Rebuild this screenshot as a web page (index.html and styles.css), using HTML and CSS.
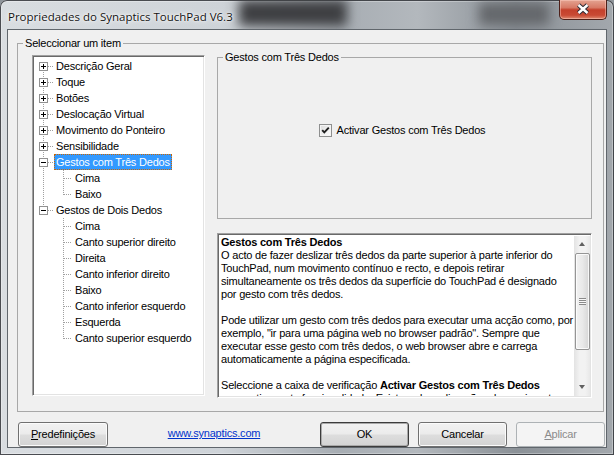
FILE: index.html
```html
<!DOCTYPE html>
<html lang="pt">
<head>
<meta charset="utf-8">
<title>Propriedades do Synaptics TouchPad V6.3</title>
<link rel="stylesheet" href="styles.css">
</head>
<body>
<div class="window">
  <div class="titlebar">
    <span class="title">Propriedades do Synaptics TouchPad V6.3</span>
    <span class="glass glass-a" aria-hidden="true"></span>
    <span class="glass glass-b" aria-hidden="true"></span>
    <button class="close" aria-label="Fechar">
      <svg width="14" height="12" viewBox="0 0 14 12">
        <path d="M2.5 2 L11.5 10 M11.5 2 L2.5 10" stroke="#2b2b35" stroke-width="4.4" fill="none"/>
        <path d="M2.5 2 L11.5 10 M11.5 2 L2.5 10" stroke="#ffffff" stroke-width="2.4" fill="none"/>
      </svg>
    </button>
  </div>
  <div class="client">
    <fieldset class="group outer">
      <legend>Seleccionar um item</legend>
      <div class="outer-body">
        <div class="tree sunken">
          <div class="node"><span class="c0 first"><span class="exp plus"></span></span><span class="lbl">Descrição Geral</span></div>
          <div class="node"><span class="c0 mid"><span class="exp plus"></span></span><span class="lbl">Toque</span></div>
          <div class="node"><span class="c0 mid"><span class="exp plus"></span></span><span class="lbl">Botões</span></div>
          <div class="node"><span class="c0 mid"><span class="exp plus"></span></span><span class="lbl">Deslocação Virtual</span></div>
          <div class="node"><span class="c0 mid"><span class="exp plus"></span></span><span class="lbl">Movimento do Ponteiro</span></div>
          <div class="node"><span class="c0 mid"><span class="exp plus"></span></span><span class="lbl">Sensibilidade</span></div>
          <div class="node"><span class="c0 mid"><span class="exp"></span></span><span class="lbl sel">Gestos com Três Dedos</span></div>
          <div class="node"><span class="c1 cont mid"></span><span class="lbl">Cima</span></div>
          <div class="node"><span class="c1 cont last"></span><span class="lbl">Baixo</span></div>
          <div class="node"><span class="c0 last"><span class="exp"></span></span><span class="lbl">Gestos de Dois Dedos</span></div>
          <div class="node"><span class="c1 mid"></span><span class="lbl">Cima</span></div>
          <div class="node"><span class="c1 mid"></span><span class="lbl">Canto superior direito</span></div>
          <div class="node"><span class="c1 mid"></span><span class="lbl">Direita</span></div>
          <div class="node"><span class="c1 mid"></span><span class="lbl">Canto inferior direito</span></div>
          <div class="node"><span class="c1 mid"></span><span class="lbl">Baixo</span></div>
          <div class="node"><span class="c1 mid"></span><span class="lbl">Canto inferior esquerdo</span></div>
          <div class="node"><span class="c1 mid"></span><span class="lbl">Esquerda</span></div>
          <div class="node"><span class="c1 last"></span><span class="lbl">Canto superior esquerdo</span></div>
        </div>
        <div class="right-col">
          <fieldset class="group inner">
            <legend>Gestos com Três Dedos</legend>
            <div class="inner-body">
              <label class="check">
                <span class="cb">
                  <svg width="11" height="11" viewBox="0 0 11 11"><path d="M2.2 5.2 L4.3 7.4 L8.8 2.6" stroke="#1e1e1e" stroke-width="1.9" fill="none"/></svg>
                </span>
                <span>Activar Gestos com Três Dedos</span>
              </label>
            </div>
          </fieldset>
          <div class="desc sunken">
            <div class="desc-text">
              <p><b>Gestos com Três Dedos</b><br>O acto de fazer deslizar três dedos da parte superior à parte inferior do<br>TouchPad, num movimento contínuo e recto, e depois retirar<br>simultaneamente os três dedos da superfície do TouchPad é designado<br>por gesto com três dedos.</p>
              <p>Pode utilizar um gesto com três dedos para executar uma acção como, por<br>exemplo, "ir para uma página web no browser padrão". Sempre que<br>executar esse gesto com três dedos, o web browser abre e carrega<br>automaticamente a página especificada.</p>
              <p>Seleccione a caixa de verificação <b>Activar Gestos com Três Dedos</b><br>para activar esta funcionalidade. Existem duas direcções de movimento</p>
            </div>
            <div class="scrollbar">
              <div class="sb-btn"><span class="arrow up"></span></div>
              <div class="sb-thumb"><span class="grip"></span></div>
              <div class="sb-track"></div>
              <div class="sb-btn"><span class="arrow down"></span></div>
            </div>
          </div>
        </div>
      </div>
    </fieldset>
    <div class="buttons">
      <button class="btn"><u>P</u>redefinições</button>
      <div class="link-area"><a class="link" href="#">www.synaptics.com</a></div>
      <button class="btn default">OK</button>
      <button class="btn">Cancelar</button>
      <button class="btn disabled"><u>A</u>plicar</button>
    </div>
  </div>
</div>
</body>
</html>
```
FILE: styles.css
```css
html, body {
  margin: 0;
  padding: 0;
  background: #8f959b;
}
body {
  width: 614px;
  height: 455px;
  overflow: hidden;
  font-family: "Liberation Sans", Arial, sans-serif;
  font-size: 11px;
  letter-spacing: -0.2px;
  color: #000;
}
.window {
  width: 614px;
  height: 455px;
  box-sizing: border-box;
  padding: 0 8px 8px;
  display: flex;
  flex-direction: column;
  border-radius: 7px 7px 0 0;
  overflow: hidden;
  background: linear-gradient(90deg, #d9dde1 0%, #ced3d8 36%, #a7adb3 55%, #b3b8bd 68%, #8b9197 84%, #a3a8ad 100%);
  box-shadow: inset 0 0 0 1px rgba(35,38,42,.8), inset 0 0 0 2px rgba(255,255,255,.3);
}
.titlebar {
  height: 30px;
  display: flex;
  align-items: flex-start;
  flex: none;
}
.title {
  position: relative;
  z-index: 1;
  font-family: "Open Sans", "Noto Sans", sans-serif;
  font-size: 11.5px;
  letter-spacing: 0;
  line-height: 15px;
  margin-top: 9px;
  color: #111;
  white-space: nowrap;
  text-shadow: 0 0 6px rgba(255,255,255,.95), 0 0 3px rgba(255,255,255,.9), 0 0 1px rgba(255,255,255,.9);
}
.glass {
  flex: none;
  display: block;
  filter: blur(6px);
}
.glass-a {
  width: 108px;
  height: 26px;
  margin: 0 0 0 6px;
  background: #3e3f42;
}
.glass-b {
  width: 70px;
  height: 22px;
  margin: 3px 10px 0 auto;
  background: #64676b;
}
.close {
  position: relative;
  z-index: 1;
  margin: 0 -1px 0 0;
  width: 48px;
  height: 20px;
  padding: 0;
  border: 1px solid #4e2019;
  border-top: 0;
  border-radius: 0 0 5px 5px;
  background: linear-gradient(to bottom, #e4a391 0%, #d77a66 40%, #c4402b 52%, #c94a34 80%, #de8a70 100%);
  box-shadow: inset 0 0 0 1px rgba(255,210,200,.45);
  display: flex;
  align-items: center;
  justify-content: center;
}
.close svg { display: block; margin-top: -1px; }
.client {
  position: relative;
  z-index: 2;
  width: 598px;
  height: 417px;
  flex: none;
  background: #f0f0f0;
  box-shadow: 0 0 0 1px #60666c;
  display: flex;
  flex-direction: column;
}
.group {
  border: 1px solid #a8a8a8;
  padding: 0;
  min-width: 0;
}
.group legend {
  padding: 0 2px;
  margin-left: 5px;
}
.outer {
  margin: 6px 0 0 9px;
  width: 587px;
  box-sizing: border-box;
}
.outer legend { line-height: 15px; }
.outer-body {
  display: flex;
  gap: 12px;
  padding: 0 11px 13px 14px;
}
.sunken {
  box-sizing: border-box;
  border: 1px solid;
  border-color: #a0a0a0 #ffffff #ffffff #a0a0a0;
  box-shadow: inset 1px 1px 0 #696969, inset -1px -1px 0 #e3e3e3;
  background: #fff;
}
.tree {
  width: 173px;
  height: 341px;
  margin-top: 4px;
  padding: 2px 0 0 2px;
  flex: none;
}
.node {
  display: flex;
  height: 16px;
  white-space: nowrap;
}
.c0, .c1 {
  flex: none;
  height: 16px;
  display: flex;
  align-items: flex-start;
  background-repeat: no-repeat;
}
.c0 { width: 19px; }
.c1 { width: 38px; }
.c0.first {
  background-image: repeating-linear-gradient(to right, #a0a0a0 0 1px, transparent 1px 2px), repeating-linear-gradient(to bottom, #a0a0a0 0 1px, transparent 1px 2px);
  background-position: 13px 8px, 8px 8px;
  background-size: 6px 1px, 1px 8px;
}
.c0.mid {
  background-image: repeating-linear-gradient(to right, #a0a0a0 0 1px, transparent 1px 2px), repeating-linear-gradient(to bottom, #a0a0a0 0 1px, transparent 1px 2px);
  background-position: 13px 8px, 8px 0;
  background-size: 6px 1px, 1px 16px;
}
.c0.last {
  background-image: repeating-linear-gradient(to right, #a0a0a0 0 1px, transparent 1px 2px), repeating-linear-gradient(to bottom, #a0a0a0 0 1px, transparent 1px 2px);
  background-position: 13px 8px, 8px 0;
  background-size: 6px 1px, 1px 9px;
}
.c1.mid {
  background-image: repeating-linear-gradient(to right, #a0a0a0 0 1px, transparent 1px 2px), repeating-linear-gradient(to bottom, #a0a0a0 0 1px, transparent 1px 2px);
  background-position: 29px 8px, 28px 0;
  background-size: 8px 1px, 1px 16px;
}
.c1.last {
  background-image: repeating-linear-gradient(to right, #a0a0a0 0 1px, transparent 1px 2px), repeating-linear-gradient(to bottom, #a0a0a0 0 1px, transparent 1px 2px);
  background-position: 29px 8px, 28px 0;
  background-size: 8px 1px, 1px 9px;
}
.c1.cont.mid {
  background-image: repeating-linear-gradient(to right, #a0a0a0 0 1px, transparent 1px 2px), repeating-linear-gradient(to bottom, #a0a0a0 0 1px, transparent 1px 2px), repeating-linear-gradient(to bottom, #a0a0a0 0 1px, transparent 1px 2px);
  background-position: 29px 8px, 28px 0, 8px 0;
  background-size: 8px 1px, 1px 16px, 1px 16px;
}
.c1.cont.last {
  background-image: repeating-linear-gradient(to right, #a0a0a0 0 1px, transparent 1px 2px), repeating-linear-gradient(to bottom, #a0a0a0 0 1px, transparent 1px 2px), repeating-linear-gradient(to bottom, #a0a0a0 0 1px, transparent 1px 2px);
  background-position: 29px 8px, 28px 0, 8px 0;
  background-size: 8px 1px, 1px 9px, 1px 16px;
}
.exp {
  width: 9px;
  height: 9px;
  box-sizing: border-box;
  margin: 4px 0 0 4px;
  border: 1px solid #919191;
  background:
    linear-gradient(#000, #000) center / 5px 1px no-repeat,
    #fff;
}
.exp.plus {
  background:
    linear-gradient(#000, #000) center / 5px 1px no-repeat,
    linear-gradient(#000, #000) center / 1px 5px no-repeat,
    #fff;
}
.lbl {
  padding: 0 2px;
  line-height: 16px;
  height: 16px;
  box-sizing: border-box;
}
.lbl.sel {
  background: #3399ff;
  color: #fff;
  outline: 1px dotted #cc6600;
  outline-offset: -1px;
}
.right-col {
  width: 375px;
  flex: none;
  display: flex;
  flex-direction: column;
}
.inner {
  margin: 0;
  height: 168px;
  box-sizing: border-box;
}
.inner legend { line-height: 13px; }
.inner-body {
  height: 154px;
  box-sizing: border-box;
  display: flex;
  align-items: center;
  justify-content: center;
  padding: 0 5px 21px 0;
}
.check {
  display: flex;
  align-items: center;
  gap: 5px;
  line-height: 13px;
}
.cb {
  width: 13px;
  height: 13px;
  box-sizing: border-box;
  border: 1px solid #8e8f8f;
  background: linear-gradient(135deg, #dcdcdc, #ffffff);
  box-shadow: inset 0 0 0 1px #f4f4f4;
  display: flex;
  align-items: center;
  justify-content: center;
}
.cb svg { display: block; }
.desc {
  margin-top: 14px;
  height: 165px;
  display: flex;
  padding: 2px 1px 1px 2px;
}
.desc-text {
  flex: 1;
  overflow: hidden;
  white-space: nowrap;
  line-height: 13px;
  padding-left: 1px;
}
.desc-text p { margin: 0 0 13px; }
.scrollbar {
  width: 16px;
  flex: none;
  display: flex;
  flex-direction: column;
  background: linear-gradient(to right, #e3e3e3, #f2f2f2 35%, #f2f2f2 70%, #e8e8e8);
}
.sb-btn {
  height: 17px;
  flex: none;
  display: flex;
  align-items: center;
  justify-content: center;
}
.arrow {
  width: 0;
  height: 0;
  border-left: 3.5px solid transparent;
  border-right: 3.5px solid transparent;
}
.arrow.up { border-bottom: 4px solid #606060; margin-top: -1px; }
.arrow.down { border-top: 4px solid #606060; margin-top: -2px; }
.sb-thumb {
  height: 97px;
  flex: none;
  box-sizing: border-box;
  margin: 0 0 0 1px;
  width: 15px;
  border: 1px solid #959595;
  border-radius: 2px;
  background: linear-gradient(to right, #f2f2f2, #e9e9e9 50%, #d6d6d6);
  box-shadow: inset 0 0 0 1px rgba(255,255,255,.8);
  display: flex;
  align-items: center;
  justify-content: center;
}
.grip {
  width: 7px;
  height: 7px;
  background: repeating-linear-gradient(to bottom, #8a8a8a 0 1px, #f8f8f8 1px 2px);
}
.sb-track { flex: 1; }
.buttons {
  display: flex;
  align-items: flex-start;
  margin-top: 10px;
  padding: 0 1px 0 10px;
  gap: 9px;
}
.btn {
  width: 89px;
  height: 25px;
  flex: none;
  box-sizing: border-box;
  font-family: "Liberation Sans", Arial, sans-serif;
  font-size: 11px;
  letter-spacing: -0.2px;
  color: #000;
  border: 1px solid #707070;
  border-radius: 3px;
  background: linear-gradient(to bottom, #f2f2f2 0%, #ebebeb 48%, #dddddd 52%, #d3d3d3 100%);
  box-shadow: inset 0 0 0 1px #fbfbfb;
  padding: 0 0 2px;
}
.btn:first-child { width: 90px; }
.btn u { text-decoration: underline; }
.btn.default {
  border-color: #3c3c3c;
  box-shadow: inset 0 0 0 1px #a9a9a9;
}
.btn.disabled {
  color: #8b8b8b;
  border-color: #adb2b5;
  background: #f4f4f4;
  box-shadow: none;
}
.link-area {
  flex: 1;
  text-align: center;
  line-height: 23px;
  margin: 0 -9px;
}
.link {
  color: #0033cc;
  text-decoration: underline;
}
```
